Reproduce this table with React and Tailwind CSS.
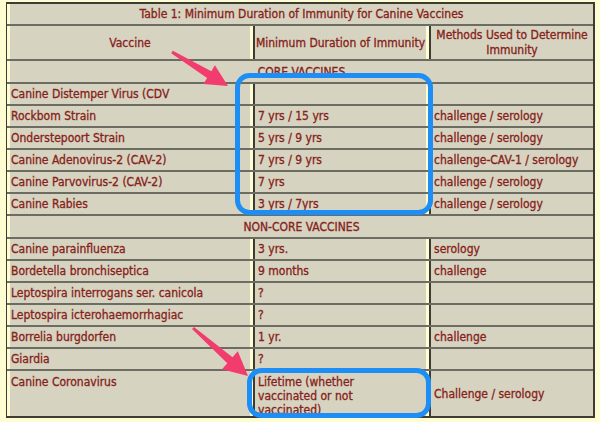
const rows = [
  { name: 'Canine Distemper Virus (CDV', dur: '', how: '' },
  { name: 'Rockbom Strain', dur: '7 yrs / 15 yrs', how: 'challenge / serology' },
  { name: 'Onderstepoort Strain', dur: '5 yrs / 9 yrs', how: 'challenge / serology' },
  { name: 'Canine Adenovirus-2 (CAV-2)', dur: '7 yrs / 9 yrs', how: 'challenge-CAV-1 / serology' },
  { name: 'Canine Parvovirus-2 (CAV-2)', dur: '7 yrs', how: 'challenge / serology' },
  { name: 'Canine Rabies', dur: '3 yrs / 7yrs', how: 'challenge / serology' },
]

const nonCore = [
  { name: 'Canine parainfluenza', dur: '3 yrs.', how: 'serology' },
  { name: 'Bordetella bronchiseptica', dur: '9 months', how: 'challenge' },
  { name: 'Leptospira interrogans ser. canicola', dur: '?', how: '' },
  { name: 'Leptospira icterohaemorrhagiac', dur: '?', how: '' },
  { name: 'Borrelia burgdorfen', dur: '1 yr.', how: 'challenge' },
  { name: 'Giardia', dur: '?', how: '' },
]

function Gap() {
  return <div className="w-[3px] shrink-0 bg-[#fefdd2]" />
}

function Sep() {
  return <div className="w-[5px] shrink-0 bg-[#fefdd2] border-r-2 border-[#3c3c34]" />
}

function Row({ name, dur, how }) {
  return (
    <div className="flex h-[22px] border-t-2 border-[#6d6c63]">
      <Gap />
      <div className="w-[240px] bg-[#d6d3c0] pl-[1px] flex items-center">{name}</div>
      <Sep />
      <div className="w-[171px] bg-[#d6d3c0] pl-[3px] flex items-center">{dur}</div>
      <Sep />
      <div className="flex-1 bg-[#d6d3c0] pl-[3px] flex items-center">{how}</div>
    </div>
  )
}

function Span({ children, h = 'h-[22px]' }) {
  return (
    <div className={`flex ${h} border-t-2 border-[#6d6c63]`}>
      <Gap />
      <div className="flex-1 bg-[#d6d3c0] flex items-center justify-center">{children}</div>
    </div>
  )
}

export default function App() {
  return (
    <div
      className="relative w-[600px] h-[422px] overflow-hidden bg-[#fefdd2] pt-[2px] text-[12px] leading-[14px] text-[#86221a] [-webkit-text-stroke:0.3px_#86221a]"
      style={{ fontFamily: '"DejaVu Sans Condensed", "DejaVu Sans", sans-serif' }}
    >
      <div className="ml-[6px] w-[589px] border-l border-r-2 border-b-2 border-[#3c3c34]">
        <div className="flex h-[22px] border-t-2 border-[#3c3c34]">
          <Gap />
          <div className="flex-1 bg-[#d6d3c0] flex items-center justify-center">
            Table 1: Minimum Duration of Immunity for Canine Vaccines
          </div>
        </div>
        <div className="flex h-[35px] border-t-2 border-[#6d6c63]">
          <Gap />
          <div className="w-[240px] bg-[#d6d3c0] flex items-center justify-center">Vaccine</div>
          <Sep />
          <div className="w-[171px] bg-[#d6d3c0] flex items-center justify-center">Minimum Duration of Immunity</div>
          <Sep />
          <div className="flex-1 bg-[#d6d3c0] flex items-center justify-center text-center leading-[15px]">
            Methods Used to Determine
            <br />
            Immunity
          </div>
        </div>
        <Span h="h-[23px]">CORE VACCINES</Span>
        {rows.map((r) => (
          <Row key={r.name} {...r} />
        ))}
        <Span h="h-[23px]">NON-CORE VACCINES</Span>
        {nonCore.map((r) => (
          <Row key={r.name} {...r} />
        ))}
        <div className="flex h-[47px] border-t-2 border-[#6d6c63]">
          <Gap />
          <div className="w-[240px] bg-[#d6d3c0] pl-[1px] pt-[4px]">Canine Coronavirus</div>
          <Sep />
          <div className="w-[171px] bg-[#d6d3c0] pl-[3px] pt-[4px]">
            Lifetime (whether
            <br />
            vaccinated or not
            <br />
            vaccinated)
          </div>
          <Sep />
          <div className="flex-1 bg-[#d6d3c0] pl-[3px] flex items-center">Challenge / serology</div>
        </div>
      </div>

      <svg className="absolute inset-0 pointer-events-none" width="600" height="422" viewBox="0 0 600 422">
        <rect x="237.5" y="75.5" width="193" height="137" rx="12" fill="none" stroke="#1c8ef5" strokeWidth="5" />
        <rect x="249.5" y="370.5" width="179" height="45" rx="12" fill="none" stroke="#1c8ef5" strokeWidth="5" />
        <polygon
          points="172.8,50.7 211.3,71.2 214.9,65.2 228,86 203.5,84 207.1,78 171.2,53.3"
          fill="#f23c6e"
        />
        <polygon
          points="194,326.9 232.5,357.2 237.8,351.2 248,376 222,369.2 227.3,363.2 192,329.1"
          fill="#f23c6e"
        />
      </svg>
    </div>
  )
}
